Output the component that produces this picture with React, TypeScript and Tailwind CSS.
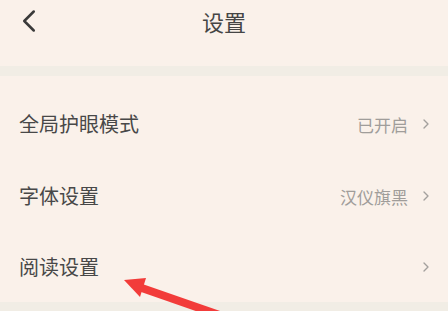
import { ChevronLeft, ChevronRight } from 'lucide-react';

const ROWS = [
  { label: '全局护眼模式', value: '已开启', h: 'h-[72px]' },
  { label: '字体设置', value: '汉仪旗黑', h: 'h-[72px]' },
  { label: '阅读设置', value: '', h: 'h-[70px]' },
];

function SettingRow({ label, value, h }: { label: string; value: string; h: string }) {
  return (
    <div className={`flex items-center justify-between pl-[19px] pr-[14px] ${h}`}>
      <span className="text-[20px] leading-none text-[#484848]">{label}</span>
      <div className="flex items-center gap-[10px]">
        {value && <span className="text-[17px] leading-none text-[#a09d9a]">{value}</span>}
        <ChevronRight size={16} strokeWidth={2} className="text-[#a3a09d]" />
      </div>
    </div>
  );
}

function RedArrow() {
  // annotation arrow pointing at the last row
  return (
    <svg className="absolute left-[118px] top-[274px]" width="110" height="40" viewBox="0 0 110 40">
      <polygon points="6,6 28,4 22,23" fill="#f23c3a" />
      <line x1="18" y1="12" x2="110" y2="44" stroke="#f23c3a" strokeWidth="8" />
    </svg>
  );
}

export default function App() {
  return (
    <div
      className="relative w-[448px] h-[311px] overflow-hidden bg-[#faf1ea]"
      style={{ fontFamily: '"Noto Sans CJK SC", "Noto Sans", sans-serif' }}
    >
      <header className="relative flex items-center justify-center h-[42px]">
        <ChevronLeft size={38} strokeWidth={1.6} className="absolute left-[10px] top-[2px] text-[#3a3a3a]" />
        <h1 className="text-[22px] leading-none font-normal text-[#454545]">设置</h1>
      </header>
      <div className="h-[24px]" />
      <div className="h-[10px] bg-[#f1ede5]" />
      <div className="pt-[12px]">
        {ROWS.map(r => <SettingRow key={r.label} {...r} />)}
      </div>
      <div className="h-[20px] bg-[#f1ede5]" />
      <RedArrow />
    </div>
  );
}
